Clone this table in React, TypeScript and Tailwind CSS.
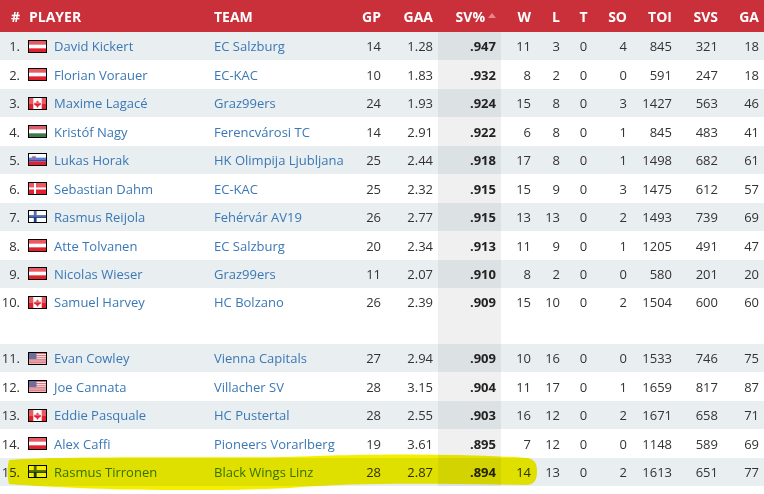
import React from 'react';

type Row = {
  rank: number;
  flag: string;
  player: string;
  team: string;
  gp: number;
  gaa: string;
  sv: string;
  w: number;
  l: number;
  t: number;
  so: number;
  toi: number;
  svs: number;
  ga: number;
  tall?: boolean;
};

const rows: Row[] = [
  { rank: 1, flag: 'at', player: 'David Kickert', team: 'EC Salzburg', gp: 14, gaa: '1.28', sv: '.947', w: 11, l: 3, t: 0, so: 4, toi: 845, svs: 321, ga: 18 },
  { rank: 2, flag: 'at', player: 'Florian Vorauer', team: 'EC-KAC', gp: 10, gaa: '1.83', sv: '.932', w: 8, l: 2, t: 0, so: 0, toi: 591, svs: 247, ga: 18 },
  { rank: 3, flag: 'ca', player: 'Maxime Lagacé', team: 'Graz99ers', gp: 24, gaa: '1.93', sv: '.924', w: 15, l: 8, t: 0, so: 3, toi: 1427, svs: 563, ga: 46 },
  { rank: 4, flag: 'hu', player: 'Kristóf Nagy', team: 'Ferencvárosi TC', gp: 14, gaa: '2.91', sv: '.922', w: 6, l: 8, t: 0, so: 1, toi: 845, svs: 483, ga: 41 },
  { rank: 5, flag: 'si', player: 'Lukas Horak', team: 'HK Olimpija Ljubljana', gp: 25, gaa: '2.44', sv: '.918', w: 17, l: 8, t: 0, so: 1, toi: 1498, svs: 682, ga: 61 },
  { rank: 6, flag: 'dk', player: 'Sebastian Dahm', team: 'EC-KAC', gp: 25, gaa: '2.32', sv: '.915', w: 15, l: 9, t: 0, so: 3, toi: 1475, svs: 612, ga: 57 },
  { rank: 7, flag: 'fi', player: 'Rasmus Reijola', team: 'Fehérvár AV19', gp: 26, gaa: '2.77', sv: '.915', w: 13, l: 13, t: 0, so: 2, toi: 1493, svs: 739, ga: 69 },
  { rank: 8, flag: 'at', player: 'Atte Tolvanen', team: 'EC Salzburg', gp: 20, gaa: '2.34', sv: '.913', w: 11, l: 9, t: 0, so: 1, toi: 1205, svs: 491, ga: 47 },
  { rank: 9, flag: 'at', player: 'Nicolas Wieser', team: 'Graz99ers', gp: 11, gaa: '2.07', sv: '.910', w: 8, l: 2, t: 0, so: 0, toi: 580, svs: 201, ga: 20 },
  { rank: 10, flag: 'ca', player: 'Samuel Harvey', team: 'HC Bolzano', gp: 26, gaa: '2.39', sv: '.909', w: 15, l: 10, t: 0, so: 2, toi: 1504, svs: 600, ga: 60, tall: true },
  { rank: 11, flag: 'us', player: 'Evan Cowley', team: 'Vienna Capitals', gp: 27, gaa: '2.94', sv: '.909', w: 10, l: 16, t: 0, so: 0, toi: 1533, svs: 746, ga: 75 },
  { rank: 12, flag: 'us', player: 'Joe Cannata', team: 'Villacher SV', gp: 28, gaa: '3.15', sv: '.904', w: 11, l: 17, t: 0, so: 1, toi: 1659, svs: 817, ga: 87 },
  { rank: 13, flag: 'ca', player: 'Eddie Pasquale', team: 'HC Pustertal', gp: 28, gaa: '2.55', sv: '.903', w: 16, l: 12, t: 0, so: 2, toi: 1671, svs: 658, ga: 71 },
  { rank: 14, flag: 'at', player: 'Alex Caffi', team: 'Pioneers Vorarlberg', gp: 19, gaa: '3.61', sv: '.895', w: 7, l: 12, t: 0, so: 0, toi: 1148, svs: 589, ga: 69 },
  { rank: 15, flag: 'fi', player: 'Rasmus Tirronen', team: 'Black Wings Linz', gp: 28, gaa: '2.87', sv: '.894', w: 14, l: 13, t: 0, so: 2, toi: 1613, svs: 651, ga: 77 },
];

const cols = 'grid grid-cols-[24px_190px_136px_36px_52px_63px_35px_29px_37px_30px_45px_46px_41px]';

function FlagShape({ code }: { code: string }) {
  switch (code) {
    case 'at':
      return (
        <>
          <rect width="17" height="11" fill="#e3202e" />
          <rect y="3.67" width="17" height="3.67" fill="#fff" />
        </>
      );
    case 'ca':
      return (
        <>
          <rect width="17" height="11" fill="#fff" />
          <rect width="4.3" height="11" fill="#e3202e" />
          <rect x="12.7" width="4.3" height="11" fill="#e3202e" />
          <path d="M8.5 2 L9.1 3.6 L10 3.2 L9.7 5.2 L11 4.3 L11.3 5.1 L12.2 5 L11.6 6.4 L12 6.7 L9.3 8.1 L9.5 9.2 L8.7 9 L8.7 10 L8.3 10 L8.3 9 L7.5 9.2 L7.7 8.1 L5 6.7 L5.4 6.4 L4.8 5 L5.7 5.1 L6 4.3 L7.3 5.2 L7 3.2 L7.9 3.6 Z" fill="#e3202e" />
        </>
      );
    case 'hu':
      return (
        <>
          <rect width="17" height="3.67" fill="#d2293a" />
          <rect y="3.67" width="17" height="3.67" fill="#fff" />
          <rect y="7.33" width="17" height="3.67" fill="#3f7a4a" />
        </>
      );
    case 'si':
      return (
        <>
          <rect width="17" height="3.67" fill="#fff" />
          <rect y="3.67" width="17" height="3.67" fill="#1b53c8" />
          <rect y="7.33" width="17" height="3.67" fill="#e3202e" />
          <path d="M3.2 2.4 H6.6 V5.4 Q4.9 7 3.2 5.4 Z" fill="#1b53c8" stroke="#e3202e" strokeWidth="0.5" />
        </>
      );
    case 'dk':
      return (
        <>
          <rect width="17" height="11" fill="#e3202e" />
          <rect x="5" width="2" height="11" fill="#fff" />
          <rect y="4.5" width="17" height="2" fill="#fff" />
        </>
      );
    case 'fi':
      return (
        <>
          <rect width="17" height="11" fill="#fff" />
          <rect x="4.8" width="2.8" height="11" fill="#1c3f86" />
          <rect y="4.1" width="17" height="2.8" fill="#1c3f86" />
        </>
      );
    case 'us':
      return (
        <>
          <rect width="17" height="11" fill="#fff" />
          {[0, 2, 4, 6, 8, 10].map((y) => (
            <rect key={y} y={y * 0.94} width="17" height="0.95" fill="#c8303d" />
          ))}
          <rect width="7.5" height="6" fill="#3b3f7c" />
        </>
      );
    default:
      return null;
  }
}

function Flag({ code }: { code: string }) {
  return (
    <span className="relative block w-[19px] h-[13px] border border-black shrink-0 overflow-hidden">
      <svg width="17" height="11" viewBox="0 0 17 11" className="block">
        <FlagShape code={code} />
      </svg>
      <span className="absolute inset-x-0 top-0 h-[6px] bg-white/25" />
    </span>
  );
}

function Num({ children, bold, center }: { children: React.ReactNode; bold?: boolean; center?: boolean }) {
  return (
    <div className={`h-[28.45px] flex items-center ${center ? 'justify-center' : 'justify-end pr-[5px]'} ${bold ? 'font-bold text-[#222]' : ''}`}>
      <span className="relative top-[1px]">{children}</span>
    </div>
  );
}

function Head({ children, center }: { children: React.ReactNode; center?: boolean }) {
  return (
    <div className={`flex items-center ${center ? 'justify-center' : 'justify-end pr-[5px]'}`}>{children}</div>
  );
}

export default function App() {
  return (
    <div className="relative w-[764px] h-[494px] overflow-hidden bg-white font-['Open_Sans',sans-serif] text-[13px] text-[#333]">
      <div className={`${cols} h-[32px] bg-[#c9303a] text-white text-[14px] font-bold uppercase`}>
        <div className="flex items-center justify-end pr-[4px]">#</div>
        <div className="flex items-center pl-[5px]">Player</div>
        <div className="flex items-center">Team</div>
        <Head>GP</Head>
        <Head>GAA</Head>
        <Head>
          SV%
          <svg width="8" height="5" viewBox="0 0 8 5" className="ml-[3px] mb-[2px]">
            <path d="M0 5 L4 0 L8 5 Z" fill="#e8858c" />
          </svg>
        </Head>
        <Head>W</Head>
        <Head>L</Head>
        <Head center>T</Head>
        <Head>SO</Head>
        <Head>TOI</Head>
        <Head>SVS</Head>
        <Head>GA</Head>
      </div>

      {rows.map((r) => {
        const odd = r.rank % 2 === 1;
        return (
          <div
            key={r.rank}
            className={`${cols} items-start ${r.tall ? 'h-[56px]' : 'h-[28.45px]'} ${odd ? 'bg-[#e9eef1]' : 'bg-white'}`}
          >
            <Num>
              <span className="-mr-[1px]">{r.rank}.</span>
            </Num>
            <div className="h-[28.45px] flex items-center pl-[4px] gap-[7px]">
              <Flag code={r.flag} />
              <span className="relative top-[1px] text-[#3a78b5] whitespace-nowrap">{r.player}</span>
            </div>
            <div className="h-[28.45px] flex items-center text-[#3a78b5] whitespace-nowrap">
              <span className="relative top-[1px]">{r.team}</span>
            </div>
            <Num>{r.gp}</Num>
            <Num>{r.gaa}</Num>
            <div className={`${r.tall ? 'h-[56px]' : 'h-[28.45px]'} ${odd ? 'bg-[#dce1e4]' : 'bg-[#f0f0f0]'}`}>
              <Num bold>{r.sv}</Num>
            </div>
            <Num>{r.w}</Num>
            <Num>{r.l}</Num>
            <Num center>{r.t}</Num>
            <Num>{r.so}</Num>
            <Num>{r.toi}</Num>
            <Num>{r.svs}</Num>
            <Num>{r.ga}</Num>
          </div>
        );
      })}

      {/* marker highlight over the last row */}
      <svg
        className="absolute left-0 top-[440px] pointer-events-none mix-blend-multiply"
        width="560"
        height="54"
        viewBox="0 0 560 54"
      >
        <path
          d="M9 20 C60 16 200 18 290 17 C330 15 440 12 528 18 Q538 20 537 32 Q537 45 526 45 C440 44 360 42 290 48 C200 52 80 50 9 44 Q6 32 9 20 Z"
          fill="#f4ef00"
        />
      </svg>
    </div>
  );
}
